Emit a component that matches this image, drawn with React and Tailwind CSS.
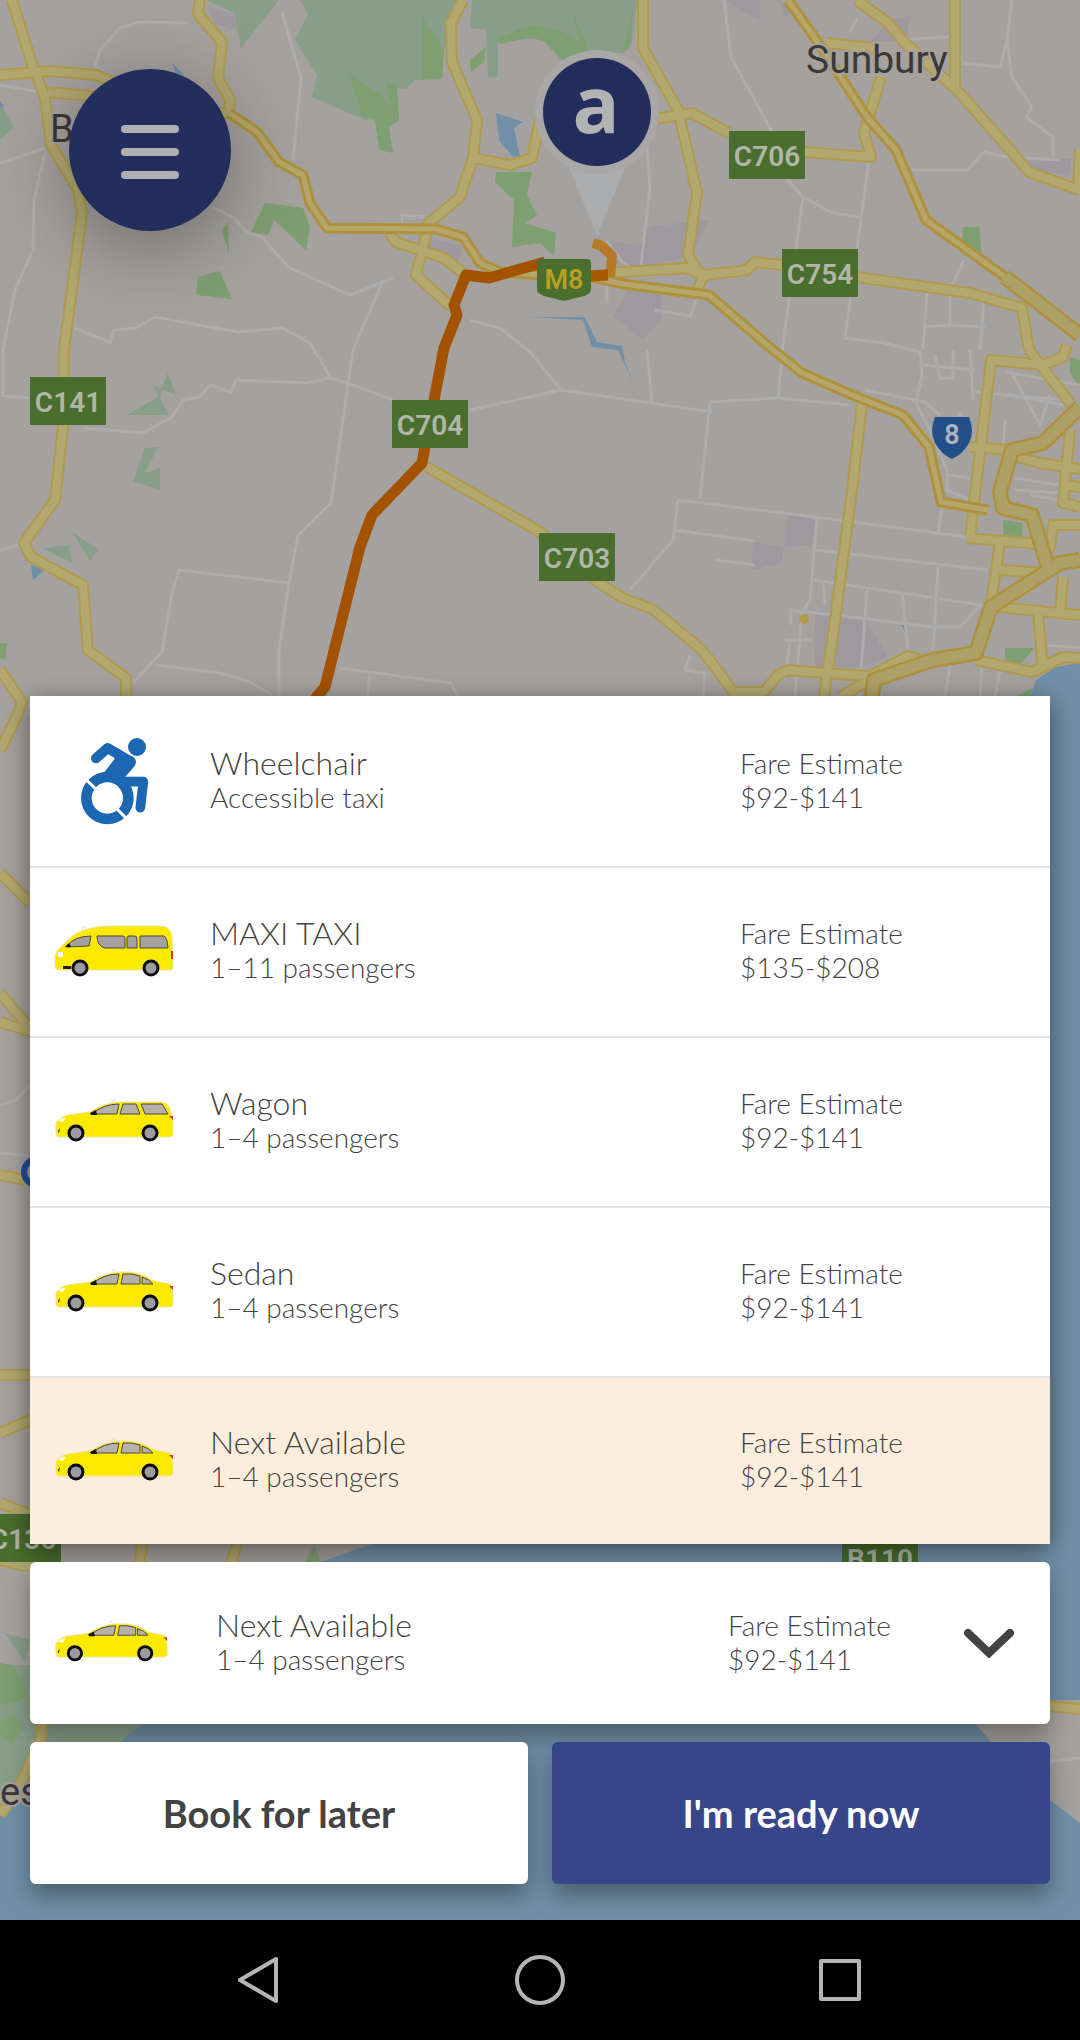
import { useState } from "react";

const MINOR_ROADS = [
  "M95 67 L100 50 L120 28 L141 22 L188 23",
  "M282 12 L301 78 L293 160",
  "M212 207 L234 218 L248 233 L262 237 L288 267 L350 295 L393 278",
  "M382 283 L353 350 L331 503 L298 535 L289 583 L279 650 L279 697",
  "M74 328 L110 342 L114 330 L136 328 L155 317 L238 332 L282 328 L310 343 L331 378",
  "M0 85 L41 92 M0 163 L48 147",
  "M45 153 L34 200 L33 250 L15 290 L3 350 L3 396 L30 398",
  "M84 428 L143 433 L172 417 L183 400 L200 397 L210 385 L231 392 L236 380 L306 383 L331 378 L348 383 L393 400",
  "M289 583 L179 570 L172 593 L162 652 L133 683 M155 665 L220 673 L250 682 L272 695",
  "M339 668 L451 683 L458 697 M370 675 L367 697",
  "M470 410 L561 390 L712 412 M470 320 L500 328 L530 352 L561 390",
  "M0 550 L19 545 M0 1105 L16 1100 L30 1085 M0 1153 L30 1156",
  "M402 230 L402 215 L424 217",
  "M724 0 L731 57 L760 110 L771 130 L788 180 L803 197 L833 213 L859 217",
  "M803 197 L783 345 L778 398 M869 160 L845 338 L884 343 L920 352",
  "M647 147 L650 187 L640 273 L622 262 L607 242 L607 303",
  "M912 170 L967 170 L984 152 L1008 157 L1060 160",
  "M1012 0 L1007 40 L1000 67 L962 63 M1007 40 L1012 77 L1032 107 L1026 117 L1053 137 L1053 160",
  "M857 18 L850 32 M905 40 L955 36",
  "M927 293 L923 350 M964 260 L950 290 L950 325 L924 327 M950 325 L985 327 M985 290 L980 350",
  "M920 350 L922 375 L916 403 L930 430 L947 470 L947 490 L970 500",
  "M922 365 L975 370 M935 355 L940 378 L953 378 L953 350 M970 350 L973 400",
  "M1005 372 L1080 385 M1005 395 L1065 405 M1010 370 L1040 425 L1050 395 M975 392 L1065 400",
  "M865 390 L905 398 L925 402 L940 415 M960 412 L960 440 M1005 420 L1003 450",
  "M710 402 L778 398 L850 405 M710 402 L700 498 M647 350 L652 402",
  "M678 500 L815 517 L967 537 M678 500 L673 540 L630 590 M674 530 L755 541",
  "M817 517 L810 600 L802 613 L795 697 M815 550 L988 570",
  "M814 580 L981 605 L960 627 L933 627 L791 610 L791 625",
  "M867 590 L859 697 M902 592 L908 650 M938 567 L933 650",
  "M942 505 L938 535 M947 475 L970 478 M1015 478 L1060 485 M1030 495 L1060 500 M1015 490 L1060 493",
  "M785 640 L812 640 M790 640 L785 680 M690 655 L685 670 L705 673 L703 697",
  "M950 665 L945 697 M982 665 L980 697 M1000 670 L995 697 M1045 645 L1080 648",
  "M655 310 L690 316 L697 298 M715 560 L755 565 M823 585 L825 605",
  "M1000 1766 L1080 1758",
];

// local yellow roads
const ROADS = [
  "M12 0 L33 67 L45 97 L51 145 L78 190 L82 213 L64 350 L63 427 L55 500 L24 543 L31 557 L83 585 L88 650 L126 678 L126 700",
  "M0 75 L52 71 L96 75 L120 85 L150 110 L229 113 M48 92 L100 97",
  "M200 0 L198 14 L222 42 L218 78 L230 100 L229 113",
  "M463 0 L451 23 L452 62 L477 120 L473 158 L460 197 L429 223 L416 275 L451 307",
  "M389 233 L396 242 L444 258 L463 273",
  "M473 158 L510 165 L532 158 L540 120",
  "M643 0 L643 48 L678 110 L697 193 L688 255 L702 278 L698 290",
  "M655 119 L692 113 L729 133 M805 152 L871 157 L864 133 L881 77",
  "M857 0 L888 23 L905 43 L957 90 L1019 160 L1029 172 L1080 190 M1080 150 L1078 190",
  "M955 0 L955 90 M826 43 L874 48",
  "M608 273 L685 268 L705 275 L747 270 L755 262 L781 265 L857 277 L970 293 L1022 308 L1029 350",
  "M427 467 L540 532 L599 583 L623 598 L654 610 L702 650 L736 695",
  "M736 692 L764 692 L778 675 L788 670 L826 673 L880 677",
  "M862 405 L852 490 L836 613 L824 697",
  "M970 537 L991 360 L1043 365 L1063 357 L1067 345 M1029 350 L1070 403",
  "M970 447 L1012 450 M1017 457 L1040 463 L1080 469 M1070 430 L1063 503 L1080 507 M1067 485 L1080 487",
  "M967 538 L1029 543 L1050 547 L1053 525 L1080 525",
  "M1000 543 L991 603 M1000 570 L1043 573 M998 607 L1080 615 M1063 577 L1060 613",
  "M1038 613 L1043 668 M976 660 L1032 672 L1063 657 L1080 658",
  "M872 675 L908 656 L925 662 M840 697 L870 680",
  "M0 670 L22 702 L18 714 L0 750 M0 873 L30 903 M0 993 L32 1031 M0 1022 L32 1032",
  "M0 1175 L25 1180 M0 1375 L32 1375 M0 1433 L32 1419 M0 1503 L32 1515",
  "M143 1540 L139 1565 M238 1540 L231 1565",
  "M0 1560 L25 1566 L34 1560 M44 1715 L40 1742 L18 1790 L0 1815",
  "M1040 1705 L1080 1709",
];

// highways have a narrower centre and a stronger edge
const HIGHWAYS = [
  "M229 113 L257 132 L279 162 L303 175 L310 203 L327 228 L436 229 L463 237 L480 263 L500 272 L540 275 L592 277 L623 284 L709 295 L767 345 L802 373 L857 397 L903 415 L929 447 L941 502 L988 510",
  "M788 0 L815 38 L867 117 L896 150 L926 220 L1005 277 L1080 333",
];

const TRUNKS = [
  "M1080 407 L1043 443 L1012 450 L1000 492 L1003 508 L1032 515 L1048 567",
  "M1080 560 L1060 563 L991 607 L976 653 L933 660 L874 680 L872 697",
  "M1005 277 L1080 335",
];

const FORESTS = [
  "M207 0 L234 13 L241 48 L279 0 Z",
  "M300 0 L308 15 L295 40 L317 75 L312 97 L365 120 L398 118 L397 88 L406 89 L415 80 L442 79 L444 50 L463 0 Z",
  "M472 0 L470 28 L486 30 L488 78 L498 77 L498 42 L540 38 L560 58 L624 53 L632 43 L637 0 Z",
  "M0 103 L14 127 L0 140 Z",
  "M168 373 L176 395 L162 390 L160 398 L169 415 L127 415 L158 397 L153 385 L161 388 Z",
  "M145 448 L158 447 L145 473 L160 468 L160 490 L133 481 Z",
  "M43 548 L69 545 L72 563 Z M72 532 L98 549 L90 561 Z",
  "M5 1633 L30 1640 L25 1663 Z M0 1665 L40 1665 L40 1740 L0 1740 Z",
  "M40 1722 L142 1722 L122 1745 L40 1745 Z M38 1745 L20 1790 L0 1795 L0 1725 Z",
];

const PARKS = [
  "M348 73 L379 93 L390 108 L386 80 L397 88 L399 120 L389 127 L393 153 L379 150 L375 120 L362 115 Z",
  "M422 17 L444 50 L442 78 L422 80 Z",
  "M498 38 L530 25 L560 30 L580 42 L572 13 L588 45 L586 56 L562 60 L545 42 L530 37 L500 44 Z",
  "M470 60 L486 47 L484 62 L471 72 Z M631 20 L634 10 L629 48 L622 53 Z",
  "M496 172 L532 172 L527 195 L537 215 L525 223 L556 233 L554 256 L540 243 L512 247 L514 200 L495 182 Z",
  "M265 203 L303 208 L310 227 L306 250 L274 220 L268 235 L251 232 Z",
  "M228 222 L229 255 L222 230 Z M198 277 L220 271 L232 299 L196 295 Z",
  "M963 227 L979 227 L982 257 L962 243 Z M1070 357 L1080 360 L1080 387 L1070 373 Z",
  "M1003 520 L1022 523 L1022 537 L1003 535 Z M1005 648 L1034 648 L1022 663 L1005 662 Z",
  "M1015 697 L1032 688 L1034 697 Z M0 643 L7 643 L5 660 L0 658 Z",
  "M305 1562 L314 1546 L321 1562 Z",
  "M0 1663 L12 1665 L28 1690 L20 1702 L0 1704 Z M0 1722 L14 1714 L24 1728 L12 1744 L0 1736 Z",
];

const URBAN = [
  "M726 0 L760 0 L760 20 L743 13 Z M780 0 L795 10 L783 18 Z M890 20 L910 16 L905 42 L870 42 Z",
  "M650 227 L680 223 L710 220 L690 255 L640 270 L610 262 L607 242 L640 245 Z",
  "M630 287 L661 293 L661 320 L643 340 L614 317 Z",
  "M210 8 L234 14 L236 30 L215 24 Z M430 238 L462 246 L458 262 L432 250 Z",
  "M788 515 L815 517 L812 545 L784 547 Z M753 542 L784 547 L781 563 L752 570 Z",
  "M815 613 L865 620 L888 657 L860 667 L815 667 Z M1020 160 L1072 158 L1068 176 L1035 170 Z",
];

const WATER = [
  "M496 113 L523 122 L514 128 L520 157 L513 157 L499 140 Z M171 62 L184 75 L176 73 Z",
  "M529 317 L585 317 L597 342 L622 346 L625 362 L633 382 L618 350 L592 347 L583 320 Z",
  "M31 565 L45 570 L33 580 Z M901 624 L905 624 L905 632 Z M0 101 L4 106 L0 108 Z",
  "M1036 680 L1056 667 L1080 663 L1080 1700 L976 1700 L976 1724 L991 1742 L1050 1800 L1080 1823 L1080 1920 L0 1920 L0 1812 L30 1796 L120 1742 L142 1724 L320 1562 L372 1544 L1030 1544 L1030 697 Z",
];

const ROAD_SIGNS = [
  { name: "C706", x: 729, y: 131 },
  { name: "C754", x: 782, y: 249 },
  { name: "C141", x: 30, y: 377 },
  { name: "C704", x: 392, y: 400 },
  { name: "C703", x: 539, y: 533 },
  { name: "C136", x: -15, y: 1514 },
  { name: "B110", x: 842, y: 1534 },
];

const VEHICLES = [
  { id: "wheelchair", name: "Wheelchair", detail: "Accessible taxi", fare: "$92-$141", icon: WheelchairIcon },
  { id: "maxi", name: "MAXI TAXI", detail: "1–11 passengers", fare: "$135-$208", icon: VanIcon },
  { id: "wagon", name: "Wagon", detail: "1–4 passengers", fare: "$92-$141", icon: WagonIcon },
  { id: "sedan", name: "Sedan", detail: "1–4 passengers", fare: "$92-$141", icon: SedanIcon },
  { id: "next", name: "Next Available", detail: "1–4 passengers", fare: "$92-$141", icon: SedanIcon },
];

function Shapes({ paths, ...props }) {
  return (
    <g {...props}>
      {paths.map((d) => (
        <path key={d} d={d} />
      ))}
    </g>
  );
}

function MapView() {
  return (
    <svg
      className="absolute inset-0 h-full w-full bg-[#a5a19e] font-[Roboto,sans-serif]"
      viewBox="0 0 1080 1920"
      preserveAspectRatio="xMidYMin slice"
      role="img"
      aria-label="Map with the route"
    >
      <Shapes paths={URBAN} fill="#9d999e" />
      <Shapes paths={FORESTS} fill="#889e89" />
      <Shapes paths={PARKS} fill="#7e9f71" />
      <Shapes paths={WATER} fill="#7190a8" />
      <g fill="none" strokeLinejoin="round">
        <Shapes paths={MINOR_ROADS} stroke="#adadad" strokeWidth="3" />
        <Shapes paths={ROADS} stroke="#af9a4f" strokeWidth="12" />
        <Shapes paths={ROADS} stroke="#b3a86f" strokeWidth="8" />
        <Shapes paths={HIGHWAYS} stroke="#ae913c" strokeWidth="11" />
        <Shapes paths={HIGHWAYS} stroke="#b5a76b" strokeWidth="5" />
        <Shapes paths={TRUNKS} stroke="#ae913c" strokeWidth="16" />
        <Shapes paths={TRUNKS} stroke="#aea168" strokeWidth="11" />
        <path
          d="M545 262 L489 278 L466 275 L454 305 L457 315 L444 348 L422 463 L372 515 L360 547 L325 687 L314 700"
          stroke="#a35300"
          strokeWidth="11"
        />
        <path d="M593 243 L602 246 L612 256 L610 277" stroke="#b47a26" strokeWidth="10" />
        <path d="M588 276 L608 275" stroke="#a85800" strokeWidth="11" />
      </g>
      <circle cx="804" cy="619" r="5" fill="#b3994a" />
      <circle cx="37" cy="1172" r="13" fill="none" stroke="#234f9c" strokeWidth="6" />

      <g fill="#3a3937" stroke="#a5a19e" strokeWidth="4" paintOrder="stroke">
        <text x="50" y="142" fontSize="38">Bal</text>
        <text x="806" y="73" fontSize="39">Sunbury</text>
        <text x="0" y="1805" fontSize="38">es</text>
      </g>

      {ROAD_SIGNS.map((sign) => (
        <g key={sign.name}>
          <rect x={sign.x} y={sign.y} width="76" height="48" fill="#4a6e2d" />
          <text x={sign.x + 38} y={sign.y + 35} fontSize="28" fontWeight="600" textAnchor="middle" fill="#b1b6a9">
            {sign.name}
          </text>
        </g>
      ))}

      <path d="M541 259 H587 Q591 259 591 263 V290 Q590 294 584 296 L564 301 L544 296 Q537 293 537 290 V263 Q537 259 541 259 Z" fill="#4a6e2d" />
      <text x="564" y="289" fontSize="27" fontWeight="600" textAnchor="middle" fill="#b5a021">M8</text>
      <path d="M935 417 H969 Q975 432 969 443 Q963 454 952 459 Q941 454 935 443 Q929 432 935 417 Z" fill="#24508a" />
      <text x="952" y="444" fontSize="27" fontWeight="600" textAnchor="middle" fill="#adb4bb">8</text>

      <path d="M566 160 L597 236 L628 160 Z" fill="#abacad" />
      <circle cx="597" cy="112" r="62" fill="#a9a8a7" />
      <circle cx="597" cy="112" r="54" fill="#242e5c" />
      <text x="596" y="133" fontSize="78" fontWeight="700" textAnchor="middle" fill="#b2b3b5" className="font-['Open_Sans',sans-serif]">a</text>
    </svg>
  );
}

function WheelchairIcon({ className }) {
  return (
    <svg className={className} viewBox="72 120 360 300" aria-hidden="true">
      <g fill="none" stroke="#1b67b2" strokeLinecap="round" strokeLinejoin="round">
        <path d="M198 199 L233 168 L270 190" strokeWidth="30" />
        <path d="M285 269 H340 L331 347" strokeWidth="29" />
      </g>
      <circle cx="321" cy="165" r="27" fill="#1b67b2" />
      <path d="M233 153 L308 194 Q324 204 314 222 L286 254 L300 300 L260 262 Q215 255 192 278 L178 265 Q197 247 222 242 L254 200 Z" fill="#1b67b2" />
      <circle cx="232" cy="318" r="63" fill="#fff" stroke="#1b67b2" strokeWidth="32" />
      <path d="M165 260 L202 295 M258 348 L292 382" stroke="#fff" strokeWidth="9" />
    </svg>
  );
}

function Wheels({ y, front, rear }) {
  return (
    <g fill="#9b9ba0" stroke="#0b0b10" strokeWidth="3">
      <circle cx={front} cy={y} r="7" />
      <circle cx={rear} cy={y} r="7" />
    </g>
  );
}

function VanIcon({ className }) {
  return (
    <svg className={className} viewBox="0 0 120 54" aria-hidden="true">
      <path d="M1 32 Q2 25 7 22 Q18 9 30 5 Q42 1 54 1 H106 Q117 1 118 12 L119 42 Q119 45 116 45 H4 Q1 44 1 40 Z" fill="#fbe900" stroke="#e9e3ae" />
      <path d="M12 22 Q20 11 37 11 L35 21 Z M43 11 H69 Q71 11 71 14 V23 H51 Q43 21 43 11 Z M74 11 H81 Q83 11 83 14 V23 H73 V13 Z M86 11 H110 Q113 12 114 23 H86 Z" fill="#a5a0a0" stroke="#4d4936" />
      <path d="M11 22 L15 18 L17 22 Z" fill="#111" />
      <path d="M4 27 H9 V32 H4 Z" fill="#fffde0" />
      <path d="M9 41 H17 V44 H9 Z" fill="#222" />
      <path d="M117 26 H119 V34 H117 Z" fill="#d43a20" />
      <path d="M28 5 V2 Q30 0 32 3" fill="none" stroke="#ddd" />
      <Wheels y={43} front={26} rear={97} />
    </svg>
  );
}

function WagonIcon({ className }) {
  return (
    <svg className={className} viewBox="0 0 120 46" aria-hidden="true">
      <path d="M57 4 L60 0 L63 4" fill="none" stroke="#ddd" />
      <path d="M2 24 Q5 18 14 16 L36 13 Q50 4 64 3 H106 Q113 3 115 8 L119 20 V35 Q119 38 114 38 H5 Q2 38 2 34 Z" fill="#fbe900" stroke="#efe59a" />
      <path d="M38 15 Q49 5 65 5 L63 15 Z M69 5 H82 L86 15 H66 Z M87 5 H108 L114 15 H91 Z" fill="#b5b0a9" stroke="#4d4936" />
      <path d="M36 14 L42 11 L43 16 L37 16 Z M4 32 L6 29 L5 34 Z" fill="#111" />
      <path d="M4 22 Q7 18 12 19 L9 23 Z" fill="#fffde0" />
      <path d="M115 17 H119 V21 Z" fill="#e03d1c" />
      <Wheels y={34} front={22} rear={96} />
    </svg>
  );
}

function SedanIcon({ className }) {
  return (
    <svg className={className} viewBox="0 0 120 46" aria-hidden="true">
      <path d="M57 4 L60 0 L63 4" fill="none" stroke="#ddd" />
      <path d="M2 24 Q5 18 14 16 L36 13 Q52 3 68 3 Q86 2 100 12 L116 15 Q119 20 119 27 V35 Q119 38 114 38 H5 Q2 38 2 34 Z" fill="#fbe900" stroke="#efe59a" />
      <path d="M38 15 Q49 5 65 5 L63 15 Z M69 5 Q78 4 86 7 V15 H67 Z M88 8 Q95 10 99 15 H88 Z" fill="#b5b0a9" stroke="#4d4936" />
      <path d="M36 14 L42 11 L43 16 L37 16 Z M4 32 L6 29 L5 34 Z" fill="#111" />
      <path d="M4 22 Q7 18 12 19 L9 23 Z" fill="#fffde0" />
      <path d="M115 17 H119 V21 Z" fill="#e03d1c" />
      <Wheels y={34} front={22} rear={96} />
    </svg>
  );
}

function App() {
  const [selectedId, setSelectedId] = useState("next");
  const [open, setOpen] = useState(true);
  const selected = VEHICLES.find((vehicle) => vehicle.id === selectedId);
  const SelectedIcon = selected.icon;

  return (
    <div className="flex min-h-screen flex-col bg-black font-[Lato,sans-serif] text-[#434343]">
      <main className="relative flex flex-1 flex-col justify-between">
        <MapView />

        <header className="relative px-[69px] pt-[69px]">
          <button
            type="button"
            aria-label="Menu"
            className="flex size-[162px] flex-col items-center justify-center gap-[15px] rounded-full bg-[#242e5c] pt-1 shadow-[0_16px_80px_rgba(0,0,0,0.35)]"
          >
            <span className="h-2 w-[58px] rounded-full bg-[#aeb0b3]" />
            <span className="h-2 w-[58px] rounded-full bg-[#aeb0b3]" />
            <span className="h-2 w-[58px] rounded-full bg-[#aeb0b3]" />
          </button>
        </header>

        <section className="relative flex flex-col gap-[18px] px-[30px] pb-9">
          {open && (
            <ul className="bg-white pt-0.5 shadow-[0_6px_24px_rgba(0,0,0,0.5)]">
              {VEHICLES.map(({ id, name, detail, fare, icon: Icon }) => (
                <li key={id} className="h-[170px] border-b-2 border-[#e4e4e4] last:h-[166px] last:border-b-0">
                  <button
                    type="button"
                    onClick={() => setSelectedId(id)}
                    className={`flex h-full w-full items-center pl-6 text-left font-light ${
                      id === selectedId ? "bg-[#fdeddc]" : "bg-white"
                    }`}
                  >
                    <Icon className="w-[120px]" />
                    <span className="ml-9 flex flex-1 flex-col pb-1 leading-[34px]">
                      <span className="text-[32px]">{name}</span>
                      <span className="text-[28px]">{detail}</span>
                    </span>
                    <span className="flex w-[310px] flex-col pb-1 text-[28px] leading-[34px]">
                      <span>Fare Estimate</span>
                      <span>{fare}</span>
                    </span>
                  </button>
                </li>
              ))}
            </ul>
          )}

          <button
            type="button"
            aria-expanded={open}
            onClick={() => setOpen(!open)}
            className="flex h-[162px] items-center rounded-md bg-white pr-9 pl-6 text-left font-light shadow-[0_12px_24px_rgba(0,0,0,0.35)]"
          >
            <SelectedIcon className="w-[114px]" />
            <span className="ml-12 flex flex-1 flex-col pb-0.5 leading-[34px]">
              <span className="text-[32px]">{selected.name}</span>
              <span className="text-[28px]">{selected.detail}</span>
            </span>
            <span className="flex w-[236px] flex-col pb-0.5 text-[28px] leading-[34px]">
              <span>Fare Estimate</span>
              <span>{selected.fare}</span>
            </span>
            <svg className="w-[50px]" viewBox="0 0 50 30" aria-hidden="true">
              <path d="M4 5 L25 25 L46 5" fill="none" stroke="#434343" strokeWidth="8" strokeLinecap="round" />
            </svg>
          </button>

          <div className="grid grid-cols-2 gap-6 text-[38px] font-bold">
            <button type="button" className="h-[142px] rounded-md bg-white shadow-[0_12px_24px_rgba(0,0,0,0.35)]">
              Book for later
            </button>
            <button type="button" className="h-[142px] rounded-md bg-[#364689] text-white shadow-[0_12px_24px_rgba(0,0,0,0.35)]">
              I'm ready now
            </button>
          </div>
        </section>
      </main>

      <nav className="flex h-[120px] justify-center bg-black">
        <div className="grid w-[900px] grid-cols-3">
          <button type="button" aria-label="Back" className="flex items-center justify-center pl-9">
            <svg className="size-[50px]" viewBox="0 0 50 50" fill="none" stroke="#b5b5b5" strokeWidth="4" strokeLinejoin="round">
              <path d="M43 4 V46 L7 25 Z" />
            </svg>
          </button>
          <button type="button" aria-label="Home" className="flex items-center justify-center">
            <svg className="size-[50px]" viewBox="0 0 50 50" fill="none" stroke="#b5b5b5" strokeWidth="4">
              <circle cx="25" cy="25" r="23" />
            </svg>
          </button>
          <button type="button" aria-label="Recent apps" className="flex items-center justify-center">
            <svg className="size-[50px]" viewBox="0 0 50 50" fill="none" stroke="#b5b5b5" strokeWidth="4" strokeLinejoin="round">
              <rect x="6" y="6" width="38" height="38" />
            </svg>
          </button>
        </div>
      </nav>
    </div>
  );
}

export default App;
